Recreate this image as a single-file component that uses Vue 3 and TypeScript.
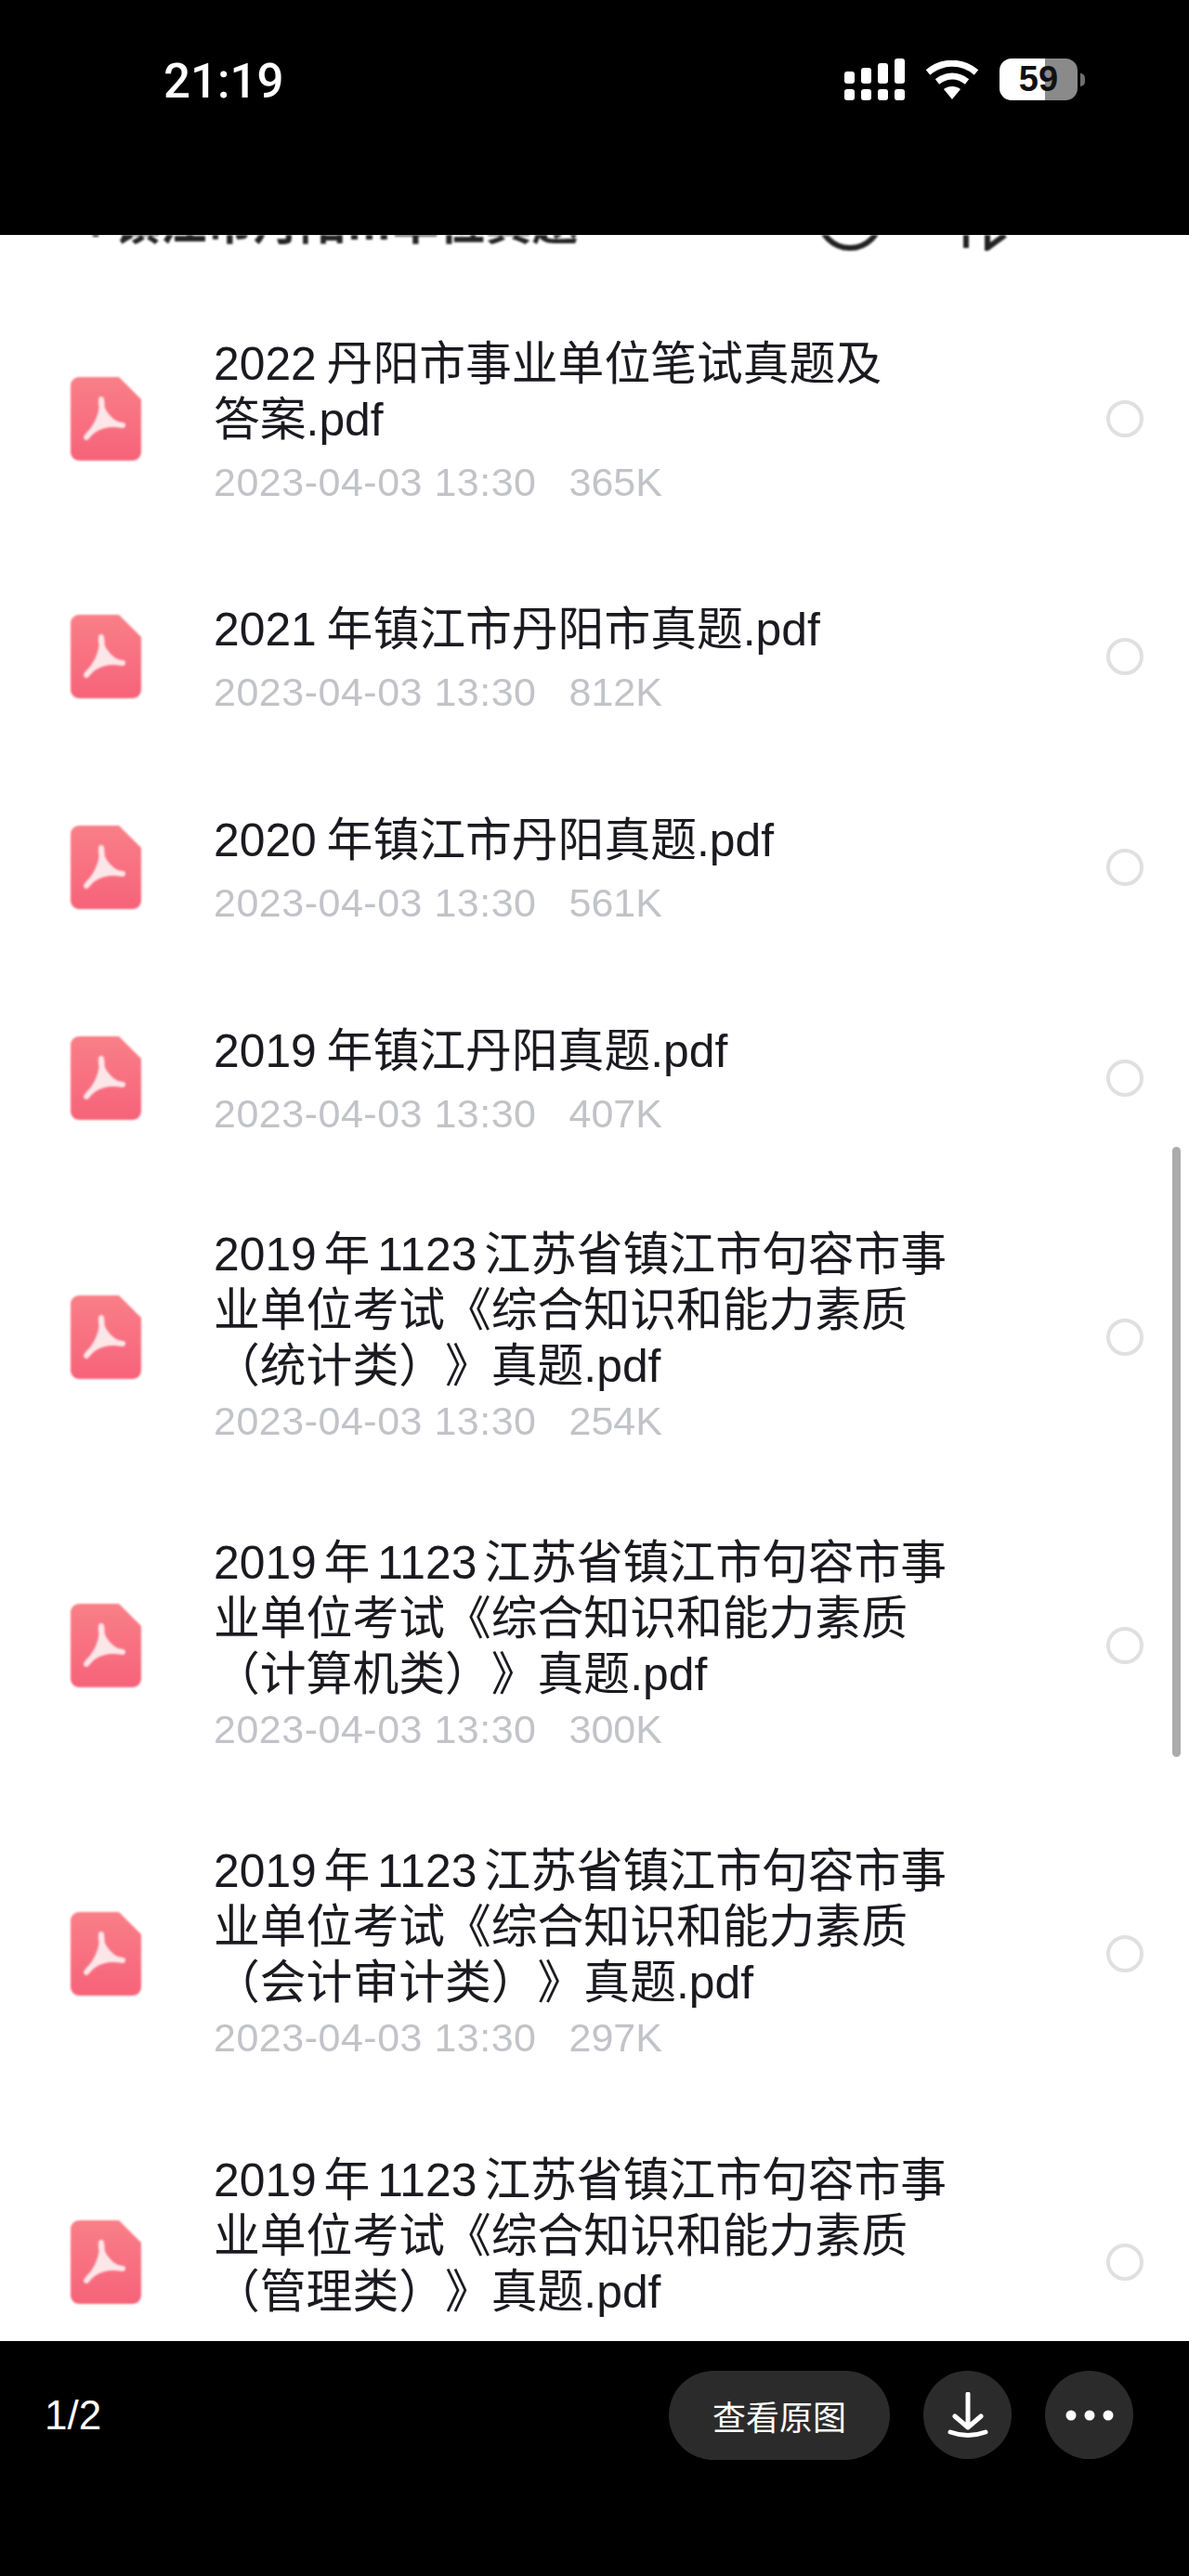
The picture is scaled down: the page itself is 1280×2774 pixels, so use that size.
<script setup lang="ts">
interface FileRow {
  lines: string[]
  size?: string
  kind: 'one' | 'two' | 'three'
}

const time = '2023-04-03 13:30'
const head = '2019 年 1123 江苏省镇江市句容市事'
const middle = '业单位考试《综合知识和能力素质'

const files: FileRow[] = [
  { lines: ['2022 丹阳市事业单位笔试真题及', '答案.pdf'], size: '365K', kind: 'two' },
  { lines: ['2021 年镇江市丹阳市真题.pdf'], size: '812K', kind: 'one' },
  { lines: ['2020 年镇江市丹阳真题.pdf'], size: '561K', kind: 'one' },
  { lines: ['2019 年镇江丹阳真题.pdf'], size: '407K', kind: 'one' },
  { lines: [head, middle, '（统计类）》真题.pdf'], size: '254K', kind: 'three' },
  { lines: [head, middle, '（计算机类）》真题.pdf'], size: '300K', kind: 'three' },
  { lines: [head, middle, '（会计审计类）》真题.pdf'], size: '297K', kind: 'three' },
  // the meta line of this one is hidden behind the bottom bar
  { lines: [head, middle, '（管理类）》真题.pdf'], kind: 'three' },
]
</script>

<template>
  <div class="viewer">
    <div class="status">
      <span class="clock">21:19</span>
      <div class="status-icons">
        <svg width="65" height="45" viewBox="0 0 65 45">
          <g fill="#fff">
            <rect x="0" y="14" width="11" height="13" rx="3" />
            <rect x="18" y="10" width="11" height="17" rx="3" />
            <rect x="36" y="5" width="11" height="22" rx="3" />
            <rect x="54" y="0" width="11" height="27" rx="3" />
            <rect x="0" y="33" width="11" height="12" rx="3" />
            <rect x="18" y="33" width="11" height="12" rx="3" />
            <rect x="36" y="33" width="11" height="12" rx="3" />
            <rect x="54" y="33" width="11" height="12" rx="3" />
          </g>
        </svg>
        <svg width="58" height="42" viewBox="0 0 58 42">
          <path d="M3 13 C18 0 40 0 55 13 M13 23 C23 15 35 15 45 23" fill="none" stroke="#fff" stroke-width="7" />
          <path d="M20 31 C25 27 33 27 38 31 L29 42 Z" fill="#fff" />
        </svg>
        <div class="battery">
          <div class="battery-body"><span>59</span></div>
          <div class="battery-tip"></div>
        </div>
      </div>
    </div>

    <div class="sheet">
      <div class="crumb">
        <div class="crumb-title">‹ 镇江市丹阳…单位真题</div>
        <div class="crumb-tools">
          <span class="crumb-circle"></span>
          <svg width="60" height="17" viewBox="0 0 60 17">
            <path d="M10 0 V14 M33 0 V14 L52 0" fill="none" stroke="#222" stroke-width="6" />
          </svg>
        </div>
      </div>

      <div class="list">
        <div v-for="(file, i) in files" :key="i" class="row" :class="[file.kind, { bare: !file.size }]">
          <svg class="pdf" width="76" height="90" viewBox="0 0 76 90">
            <defs>
              <linearGradient id="pdf-fill" x1="0" y1="0" x2="0" y2="1">
                <stop offset="0" stop-color="#f97f88" />
                <stop offset="1" stop-color="#f7637a" />
              </linearGradient>
            </defs>
            <path d="M9 0 H52 L76 24 V81 A9 9 0 0 1 67 90 H9 A9 9 0 0 1 0 81 V9 A9 9 0 0 1 9 0 Z" fill="url(#pdf-fill)" />
            <path d="M33 24 C36 38 28 54 17 65 C26 52 42 49 56 52 C46 52 31 38 33 24 Z" fill="#fde6e8" stroke="#fde6e8" stroke-width="6" stroke-linejoin="round" />
          </svg>
          <div class="info">
            <div v-for="line in file.lines" :key="line" class="title">{{ line }}</div>
            <div v-if="file.size" class="meta"><span class="when">{{ time }}</span><span>{{ file.size }}</span></div>
          </div>
          <span class="radio"></span>
        </div>
      </div>

      <div class="scrollbar"></div>
    </div>

    <div class="bottom">
      <span class="pager">1/2</span>
      <div class="actions">
        <button class="pill">查看原图</button>
        <button class="round">
          <svg width="44" height="50" viewBox="0 0 44 50">
            <path d="M22 2 V38 M8 26 L22 38 L36 26 M3 43 Q22 50 41 43" fill="none" stroke="#fff" stroke-width="5" stroke-linecap="round" stroke-linejoin="round" />
          </svg>
        </button>
        <button class="round">
          <svg width="52" height="12" viewBox="0 0 52 12">
            <circle cx="6" cy="6" r="5.5" fill="#fff" />
            <circle cx="26" cy="6" r="5.5" fill="#fff" />
            <circle cx="46" cy="6" r="5.5" fill="#fff" />
          </svg>
        </button>
      </div>
    </div>
  </div>
</template>

<style>
body {
  background: #000;
}
</style>

<style scoped>
.viewer {
  width: 1280px;
  height: 2774px;
  display: flex;
  flex-direction: column;
  background: #000;
  font-family: "Liberation Sans", "Noto Sans CJK SC", sans-serif;
  overflow: hidden;
}

.status {
  height: 253px;
  flex: none;
  display: flex;
  justify-content: space-between;
  align-items: flex-start;
  padding: 60px 112px 0 176px;
  box-sizing: border-box;
  color: #fff;
}
.clock {
  font-size: 51px;
  line-height: 56px;
  font-weight: 500;
  font-family: Roboto, sans-serif;
}
.status-icons {
  display: flex;
  align-items: center;
  gap: 22px;
  margin-top: 3px;
}
.battery {
  display: flex;
  align-items: center;
  gap: 3px;
}
.battery-body {
  width: 84px;
  height: 45px;
  border-radius: 13px;
  background: linear-gradient(90deg, #fff 58%, #8a8a8a 58%);
  display: flex;
  align-items: center;
  justify-content: center;
  color: #111;
  font-size: 38px;
  font-weight: 700;
}
.battery-tip {
  width: 5px;
  height: 14px;
  border-radius: 0 5px 5px 0;
  background: #6f6f6f;
}

.sheet {
  position: relative;
  height: 2268px;
  flex: none;
  background: #fff;
  overflow: hidden;
}
.crumb {
  height: 24px;
  overflow: hidden;
  position: relative;
  filter: blur(1px);
}
.crumb-title {
  position: absolute;
  left: 92px;
  bottom: 11px;
  font-size: 50px;
  line-height: 50px;
  font-weight: 700;
  color: #222;
  white-space: nowrap;
}
.crumb-tools {
  position: absolute;
  left: 879px;
  bottom: 7px;
  display: flex;
  gap: 79px;
  align-items: flex-end;
}
.crumb-circle {
  width: 72px;
  height: 72px;
  border: 6px solid #222;
  border-radius: 50%;
  box-sizing: border-box;
}

.list {
  padding: 31px 0 0 76px;
}
.row {
  display: flex;
  align-items: center;
  padding-right: 49px;
}
.row.one {
  height: 227px;
}
.row.two {
  height: 285px;
}
.row.three {
  height: 332px;
}
.pdf {
  flex: none;
  filter: blur(1px);
}
.info {
  flex: 1;
  margin-left: 78px;
  padding-top: 6px;
  filter: blur(0.6px);
}
.row.three .info {
  padding-top: 0;
  padding-bottom: 3px;
}
.row.bare .info {
  padding-bottom: 56px;
}
.title {
  font-size: 49.8px;
  line-height: 60px;
  word-spacing: -6px;
  text-spacing-trim: space-all;
  color: #1a1a20;
  white-space: nowrap;
}
.row.one .title,
.row.two .title {
  word-spacing: -3px;
}
.meta {
  margin-top: 11px;
  display: flex;
  gap: 35px;
  font-size: 43px;
  line-height: 52px;
  color: #c2c3c8;
}
.when {
  letter-spacing: 0.5px;
}
.row.three .meta {
  margin-top: 3px;
}
.radio {
  flex: none;
  width: 40px;
  height: 40px;
  border: 4px solid #e0e0e2;
  border-radius: 50%;
  box-sizing: border-box;
  filter: blur(0.6px);
}
.scrollbar {
  position: absolute;
  left: 1262px;
  top: 982px;
  width: 9px;
  height: 657px;
  border-radius: 5px;
  background: #ababab;
}

.bottom {
  flex: 1;
  display: flex;
  justify-content: space-between;
  align-items: flex-start;
  padding: 32px 60px 0 48px;
  color: #fff;
}
.pager {
  font-size: 44px;
  line-height: 48px;
  margin-top: 24px;
}
.actions {
  display: flex;
  gap: 36px;
}
.pill {
  width: 238px;
  height: 96px;
  border: 0;
  border-radius: 48px;
  background: #2b2b2b;
  color: #fff;
  font-family: inherit;
  font-size: 36px;
}
.round {
  width: 95px;
  height: 95px;
  border: 0;
  border-radius: 50%;
  background: #2b2b2b;
  display: flex;
  align-items: center;
  justify-content: center;
  padding: 0;
}
</style>
